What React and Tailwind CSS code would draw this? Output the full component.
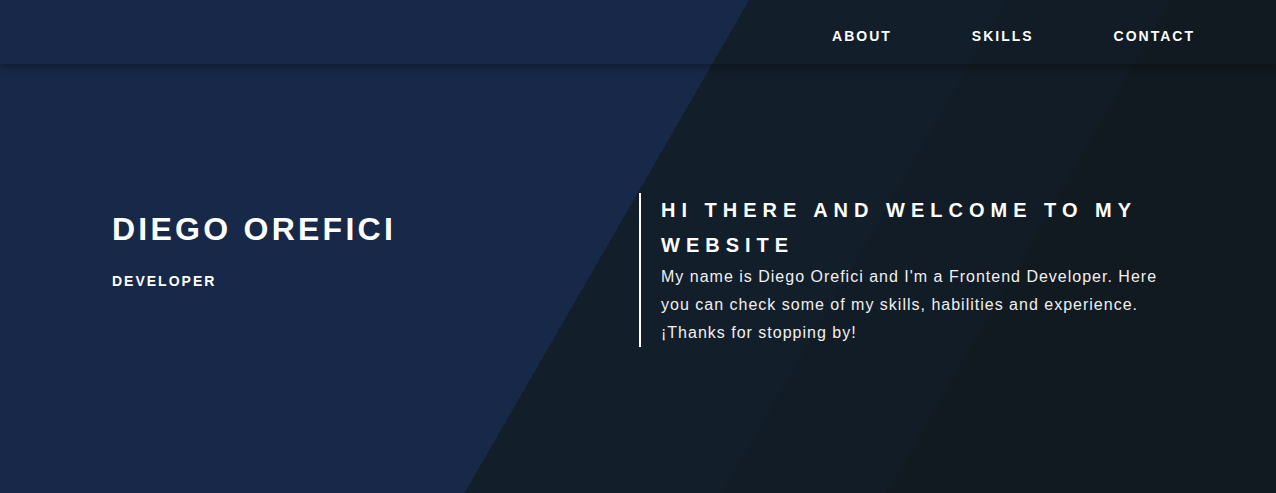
import React from 'react';

const links = ['About', 'Skills', 'Contact'];

const App = () => {
    return (
        <div className="min-h-[493px] w-full overflow-hidden font-['Liberation_Sans',Arial,sans-serif] text-white bg-[linear-gradient(120deg,#172849_48%,#131e2b_48%,#131e2b_64.5%,#121c26_64.5%,#121c26_75%,#111a21_75%)]">

            {/* Header */}
            <header className="h-16 flex items-center justify-end pr-[81px] pt-2 shadow-[0_3px_8px_rgba(0,0,0,0.35)]">
                <nav className="flex gap-[80px]">
                    {links.map(link => (
                        <a key={link} href={`#${link.toLowerCase()}`} className="text-sm font-bold uppercase tracking-[2px] leading-none text-white">
                            {link}
                        </a>
                    ))}
                </nav>
            </header>

            {/* Hero */}
            <main className="grid grid-cols-[527px_1fr] items-start px-[112px] pt-[129px] pb-10">
                <div className="mt-2">
                    <h1 className="text-[32px] leading-[1.75] font-bold uppercase tracking-[3.25px]">Diego Orefici</h1>
                    <p className="mt-3 text-sm leading-[1.75] font-bold uppercase tracking-[2px]">Developer</p>
                </div>

                <div className="border-l-2 border-white pl-5">
                    <h2 className="text-xl leading-[1.75] font-bold uppercase tracking-[6px]">Hi there and welcome to my website</h2>
                    <p className="text-base leading-[1.75] tracking-[1px] text-[#f0f0f0]">
                        My name is Diego Orefici and I'm a Frontend Developer. Here you can check some of my skills, habilities and experience. ¡Thanks for stopping by!
                    </p>
                </div>
            </main>

        </div>
    );
};

export default App;
